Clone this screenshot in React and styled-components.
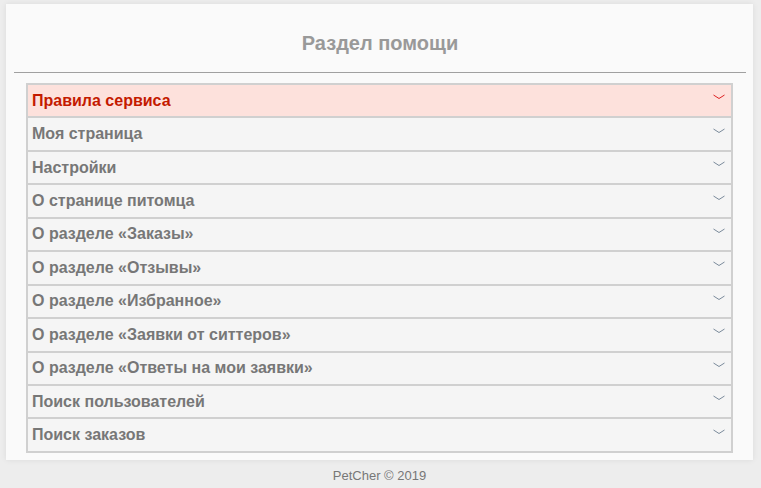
import React from "react";
import styled, { createGlobalStyle } from "styled-components";

const items = [
  "Правила сервиса",
  "Моя страница",
  "Настройки",
  "О странице питомца",
  "О разделе «Заказы»",
  "О разделе «Отзывы»",
  "О разделе «Избранное»",
  "О разделе «Заявки от ситтеров»",
  "О разделе «Ответы на мои заявки»",
  "Поиск пользователей",
  "Поиск заказов",
];

const Chevron = ({ active }) => (
  <svg width="12" height="6" viewBox="0 0 12 6">
    <polyline
      points="0.5,1 6,4.5 11.5,1"
      fill="none"
      stroke={active ? "#d22" : "#7a8a9a"}
      strokeWidth="1"
    />
  </svg>
);

export default function App() {
  return (
    <>
      <GlobalStyle />
      <Page>
        <Card>
          <Title>Раздел помощи</Title>
          <Divider />
          <List>
            {items.map((t, i) => (
              <Item key={t} active={i === 0}>
                <span>{t}</span>
                <Chevron active={i === 0} />
              </Item>
            ))}
          </List>
        </Card>
        <Footer>PetCher © 2019</Footer>
      </Page>
    </>
  );
}

const GlobalStyle = createGlobalStyle`
  html, body {
    margin: 0;
    background: #ededed;
    font-family: "Liberation Sans", Arial, sans-serif;
  }
`;

const Page = styled.div`
  padding: 4px 8px 0 6px;
`;

const Card = styled.div`
  background: #fafafa;
  box-shadow: 0 0 6px rgba(0, 0, 0, 0.08);
  padding: 0 7px 7px 8px;
`;

const Title = styled.h1`
  margin: 0;
  padding-top: 28px;
  height: 40px;
  line-height: 23px;
  font-size: 20px;
  font-weight: bold;
  color: #999;
  text-align: center;
`;

const Divider = styled.div`
  height: 1px;
  background: #a0a0a0;
`;

const List = styled.div`
  margin: 10px 13px 0 12px;
  border: 2px solid #d0d0d0;
  border-top: none;
`;

const Item = styled.div`
  display: flex;
  align-items: center;
  justify-content: space-between;
  height: 31.45px;
  padding: 0 6px 0 4px;
  border-top: 2px solid #d0d0d0;
  background: ${(p) => (p.active ? "#fde1dc" : "#f5f5f5")};
  color: ${(p) => (p.active ? "#c41a00" : "#777")};
  font-size: 16px;
  font-weight: bold;

  svg {
    margin-top: -7px;
  }
`;

const Footer = styled.div`
  padding-top: 8px;
  text-align: center;
  font-size: 13px;
  color: #777;
`;
